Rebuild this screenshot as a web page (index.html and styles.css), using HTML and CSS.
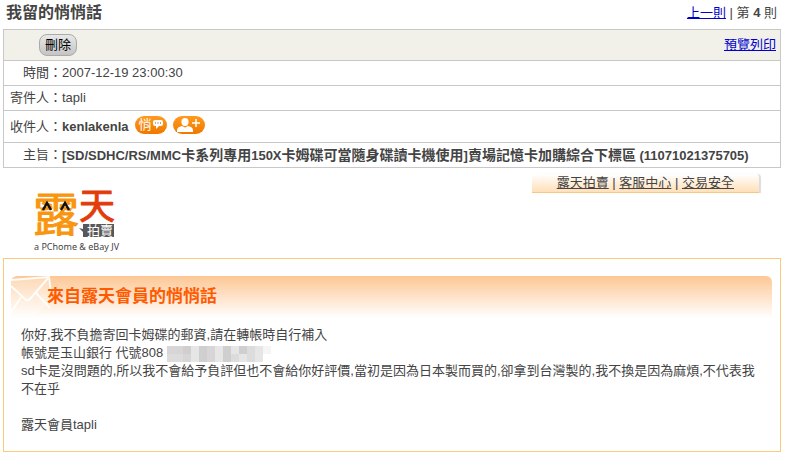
FILE: index.html
```
<!DOCTYPE html>
<html lang="zh-Hant">
<head>
    <meta charset="UTF-8">
    <meta name="viewport" content="width=device-width, initial-scale=1.0">
    <title>我留的悄悄話</title>
    <link rel="stylesheet" href="styles.css">
</head>
<body>

    <!-- Page title -->
    <div class="top">
        <h1>我留的悄悄話</h1>
        <div class="pager"><a href="#">上一則</a> | 第 <b>4</b> 則</div>
    </div>

    <!-- Message info -->
    <div class="info">
        <div class="toolbar">
            <button type="button" class="delete">刪除</button>
            <a href="#">預覽列印</a>
        </div>
        <table>
            <tr>
                <th scope="row">時間：</th>
                <td>2007-12-19 23:00:30</td>
            </tr>
            <tr>
                <th scope="row">寄件人：</th>
                <td>tapli</td>
            </tr>
            <tr class="receiver">
                <th scope="row">收件人：</th>
                <td>
                    <div class="user">
                        <b>kenlakenla</b>
                        <a href="#" class="badge">
                            <span>悄</span>
                            <svg width="10" height="10" viewBox="0 0 10 10">
                                <path d="M2 0h6q2 0 2 2v2q0 2-2 2H6L3 9V6H2Q0 6 0 4V2Q0 0 2 0z" fill="#fff"/>
                                <path d="M2 3h1M4.5 3h1M7 3h1" stroke="#8a4a10"/>
                            </svg>
                        </a>
                        <a href="#" class="badge" aria-label="加入好友">
                            <svg width="24" height="14" viewBox="0 0 24 14">
                                <ellipse cx="8" cy="4" rx="3.6" ry="4" fill="#fff"/>
                                <path d="M0 14v-2q0-3 5-4l3 1.500 3-1.500q5 1 5 4v2z" fill="#fff"/>
                                <path d="M19 1v8M15 5h8" stroke="#fff" stroke-width="1.5"/>
                            </svg>
                        </a>
                    </div>
                </td>
            </tr>
            <tr>
                <th scope="row">主旨：</th>
                <td class="subject">[SD/SDHC/RS/MMC<span>卡系列專用</span>150X<span>卡姆碟可當隨身碟讀卡機使用</span>]<span>賣場記憶卡加購綜合下標區</span> (11071021375705)</td>
            </tr>
        </table>
    </div>

    <!-- Logo and site links -->
    <div class="brand">
        <svg class="logo" width="96" height="68" viewBox="0 0 96 68">
            <text class="logo-lu" x="0" y="43">露</text>
            <text class="logo-tian" x="46" y="31">天</text>
            <path d="M10 22l4-7 4 7M28 22l4-7 4 7" fill="none" stroke="#111" stroke-width="2.5"/>
            <path d="M46 40l4 1v-5h31v13H50v-5z" fill="#58585a"/>
            <text class="logo-tag" x="54" y="47">拍賣</text>
            <text class="logo-jv" x="1" y="62">a PChome &amp; eBay JV</text>
        </svg>
        <div class="links">
            <a href="#">露天拍賣</a> | <a href="#">客服中心</a> | <a href="#">交易安全</a>
        </div>
    </div>

    <!-- Message -->
    <div class="message">
        <div class="message-title">
            <svg width="46" height="42" viewBox="0 0 46 42">
                <path d="M0 3L37 1l3 24-16 15H0z" fill="#fff" fill-opacity="0.3"/>
                <path d="M0 4L38 1l2 16M0 10l15 14q2 1 4-1L38 1M0 36l11-16M25 17l14 15" fill="none" stroke="#fff" stroke-width="2" stroke-opacity="0.9"/>
            </svg>
            <h2>來自露天會員的悄悄話</h2>
        </div>
        <div class="message-text">
            <p>你好,我不負擔寄回卡姆碟的郵資,請在轉帳時自行補入<br>
            帳號是玉山銀行 代號808
            <svg class="masked" width="104" height="16" viewBox="0 0 13 2" shape-rendering="crispEdges">
                <path d="M0 0h13v1h-1v1H0z" fill="#e6e6e6"/>
                <path d="M12 0h1v1h-1z" fill="#f5f5f5"/>
                <path d="M0 1h2v1H0zM8 1h1v1H8zM10 1h1v1h-1zM10 0h1v1h-1z" fill="#dcdcdc"/>
                <path d="M0 0h2v1H0zM2 1h1v1H2zM5 0h1v2H5z" fill="#d7d5d5"/>
                <path d="M2 0h1v1H2zM4 0h1v2H4zM7 0h1v2H7zM9 0h1v1H9z" fill="#cfcfcf"/>
            </svg><br>
            sd卡是沒問題的,所以我不會給予負評但也不會給你好評價,當初是因為日本製而買的,卻拿到台灣製的,我不換是因為麻煩,不代表我不在乎</p>
            <p>露天會員tapli</p>
        </div>
    </div>

</body>
</html>
```
FILE: styles.css
```
body {
    font-family: "Liberation Sans", "Noto Sans CJK TC", sans-serif;
    font-size: 13px;
    line-height: 18px;
    color: #444;
    background-color: #fff;
    margin: 0;
    padding: 0 5px 0 3px;
}

a {
    color: #0000cc;
}

h1, h2, p {
    margin: 0;
}

.top {
    display: flex;
    justify-content: space-between;
    align-items: center;
    height: 29px;
    padding: 0 4px 4px 3px;
    box-sizing: border-box;
}

h1 {
    font-size: 16px;
}

.info {
    border: 1px solid #c8c8c8;
}

.toolbar {
    display: flex;
    justify-content: space-between;
    align-items: center;
    height: 30px;
    padding: 0 4px 0 35px;
    background-color: #f1f1ea;
}

.delete {
    font-family: inherit;
    font-size: 13px;
    line-height: 18px;
    color: #000;
    padding: 1px 5px;
    border: 1px solid #aaa;
    border-radius: 8px;
    background: linear-gradient(#e8e8e8, #c4c4c4);
    cursor: pointer;
}

table {
    width: 100%;
    border-collapse: collapse;
}

th, td {
    height: 24px;
    padding: 0;
    border-top: 1px solid #c8c8c8;
}

th {
    width: 58px;
    font-weight: normal;
    text-align: right;
}

td {
    text-align: left;
}

.receiver th, .receiver td {
    height: 31px;
}

.user {
    display: flex;
    align-items: center;
    gap: 6px;
}

.badge {
    display: flex;
    justify-content: center;
    align-items: center;
    gap: 1px;
    width: 32px;
    height: 18px;
    margin-bottom: 3px;
    border-radius: 9px;
    background: linear-gradient(#ff9a1e, #f07800);
    color: #fff;
    text-decoration: none;
}

.subject {
    font-weight: bold;
}

.subject span {
    font-size: 14px;
}

.brand {
    display: flex;
    justify-content: space-between;
    align-items: flex-start;
    height: 90px;
    padding: 6px 22px 0 30px;
    box-sizing: border-box;
}

.logo {
    margin-top: 14px;
    overflow: visible;
}

.logo-lu, .logo-tian {
    font-family: "Noto Sans CJK TC", sans-serif;
    stroke-width: 1px;
    stroke-linejoin: round;
}

.logo-lu {
    font-size: 46px;
    fill: #f8960f;
    stroke: #f8960f;
}

.logo-tian {
    font-size: 36px;
    fill: #e23c0a;
    stroke: #e23c0a;
}

.logo-tag {
    font-size: 13px;
    fill: #fff;
}

.logo-jv {
    font-family: "Noto Sans", sans-serif;
    font-size: 9px;
    fill: #444;
}

.links {
    padding: 0 25px;
    border-bottom: 1px solid #fbc684;
    border-radius: 6px 4px 0 0;
    background: linear-gradient(#fff, #ffdfb8);
    box-shadow: 2px 0 1px #ddd;
}

.links a {
    color: #444;
}

.message {
    padding: 17px 8px 17px 7px;
    border: 1px solid #fbcb7c;
}

.message-title {
    display: flex;
    height: 42px;
    border-radius: 6px 6px 0 0;
    background: linear-gradient(#fdc794, #fff);
}

.message-title svg {
    margin-right: -10px;
}

h2 {
    font-size: 17px;
    line-height: 41px;
    color: #ff5a00;
}

.message-text {
    padding: 8px 10px 0 10px;
}

.message-text p + p {
    margin-top: 18px;
}

.masked {
    vertical-align: bottom;
}
```
